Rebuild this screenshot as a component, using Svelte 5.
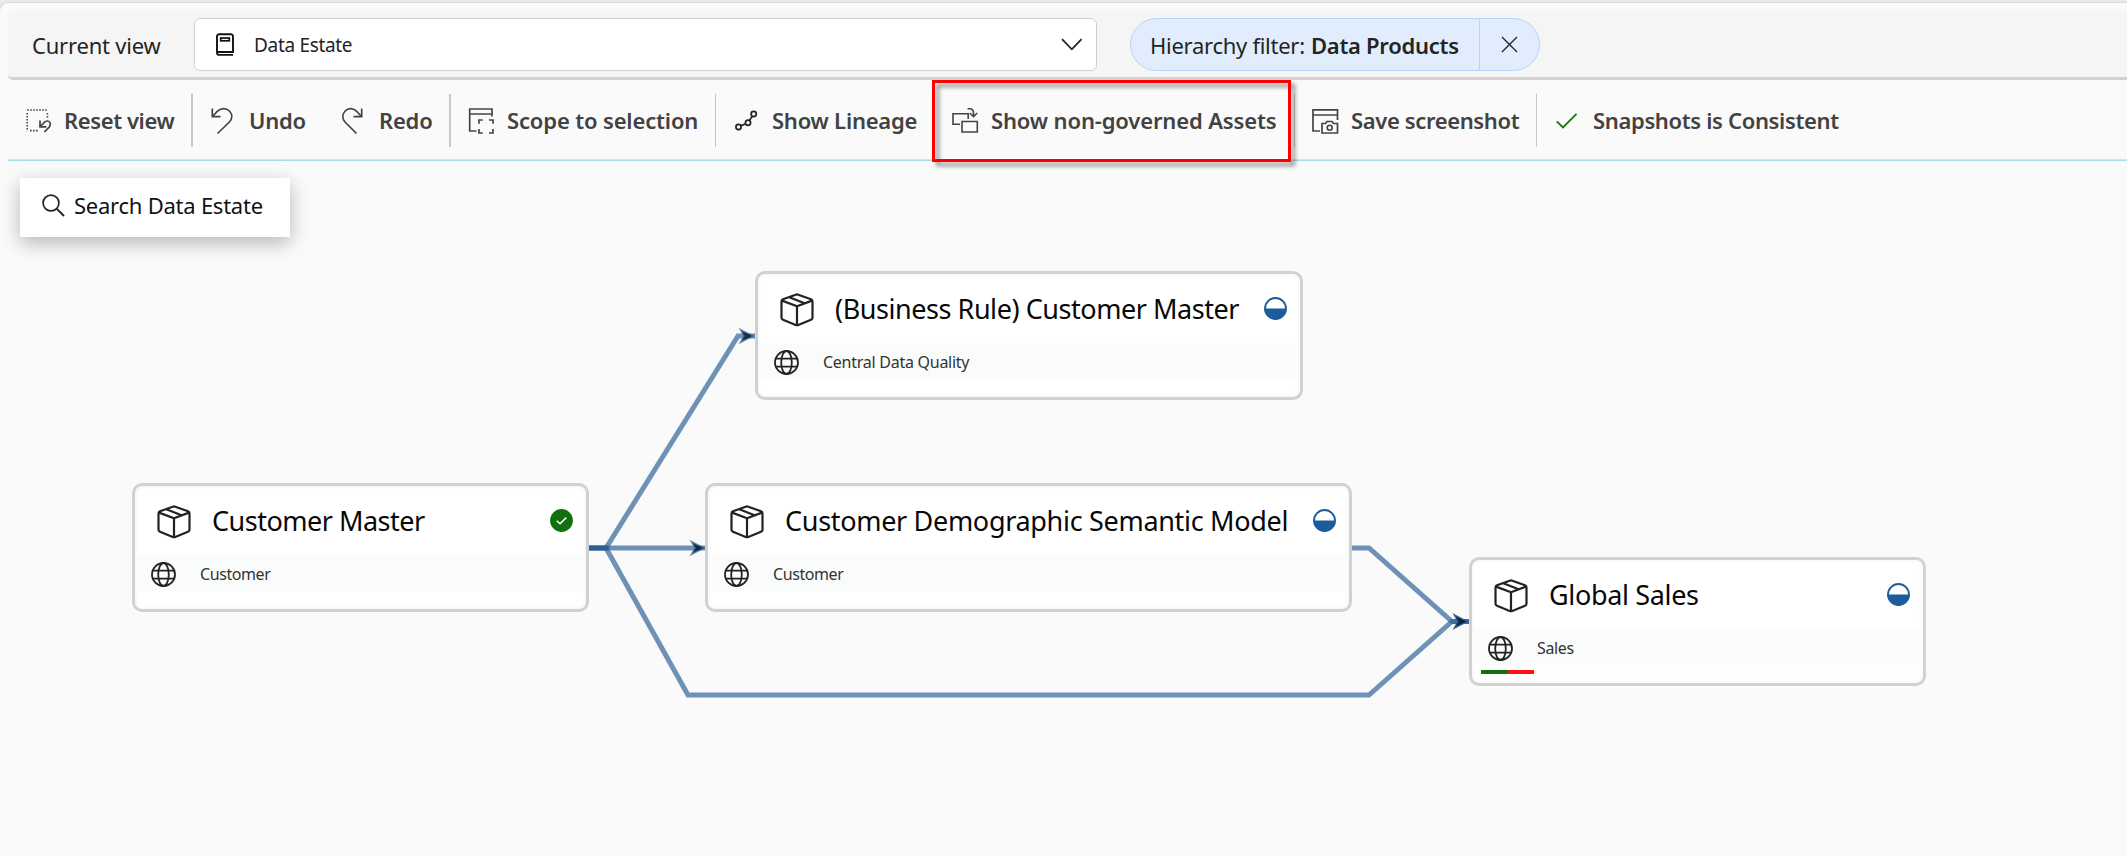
<script>
  const tools = [
    { icon: 'reset', label: 'Reset view', before: 18, iconWidth: 25, gap: 13, width: 110, spacing: -0.4, sep: 2 },
    { icon: 'undo', label: 'Undo', before: 18, iconWidth: 22, gap: 16, width: 57, spacing: -0.22, sep: 0 },
    { icon: 'redo', label: 'Redo', before: 36, iconWidth: 21, gap: 16, width: 53, spacing: -0.22, sep: 2 },
    { icon: 'scope', label: 'Scope to selection', before: 17, iconWidth: 26, gap: 13, width: 191, spacing: -0.15, sep: 1 },
    { icon: 'lineage', label: 'Show Lineage', before: 19, iconWidth: 22, gap: 15, width: 145, spacing: -0.23, sep: 0 },
    { icon: 'assets', label: 'Show non-governed Assets', before: 35, iconWidth: 26, gap: 13, width: 286, spacing: -0.14, sep: 1 },
    { icon: 'save', label: 'Save screenshot', before: 17, iconWidth: 26, gap: 13, width: 168, spacing: -0.37, sep: 1 },
    { icon: 'check', label: 'Snapshots is Consistent', before: 19, iconWidth: 21, gap: 16, width: 246, spacing: -0.35, sep: 0 }
  ];

  const nodes = [
    { x: 132, y: 483, w: 457, title: 'Customer Master', domain: 'Customer', status: 'done', spacing: -0.5, sub: -0.42 },
    { x: 755, y: 271, w: 548, title: '(Business Rule) Customer Master', domain: 'Central Data Quality', status: 'half', spacing: -0.45, sub: -0.26 },
    { x: 705, y: 483, w: 647, title: 'Customer Demographic Semantic Model', domain: 'Customer', status: 'half', spacing: -0.31, sub: -0.42 },
    { x: 1469, y: 557, w: 457, title: 'Global Sales', domain: 'Sales', status: 'half', spacing: -0.35, sub: -0.35, quality: true }
  ];

  const edges = [
    'M588 548H606L738 336H755',
    'M588 548H706',
    'M588 548H606L688 695H1369L1452 621.5H1469',
    'M1352 548H1369L1452 621.5H1469'
  ];
  const arrows = [[755, 336], [706, 548], [1469, 621.5], [1469, 621.5]];
</script>

<div class="app">
  <div class="panel">
    <header>
      <span class="view-label">Current view</span>
      <div class="select">
        <svg class="book" width="18" height="24" viewBox="0 0 18 24">
          <path d="M17 21.9H3A2 2 0 0 1 1 20V3.5A2.2 2.2 0 0 1 3.2 1.2h11.6A2.2 2.2 0 0 1 17 3.5V19H1.5" fill="none" stroke="#111" stroke-width="1.9" />
          <rect x="4.7" y="5" width="8.6" height="2.8" fill="none" stroke="#111" stroke-width="1.7" />
        </svg>
        <span class="value">Data Estate</span>
        <svg width="22" height="13" viewBox="0 0 22 13"><path d="M1 1.2 10.8 11.3 20.6 1.2" fill="none" stroke="#242424" stroke-width="1.8" /></svg>
      </div>
      <div class="pill">
        <div class="filter"><span class="ft">Hierarchy filter:</span><b>Data Products</b></div>
        <div class="close">
          <svg width="17" height="17" viewBox="0 0 17 17"><path d="M1 1 16 16M16 1 1 16" stroke="#242424" stroke-width="1.4" /></svg>
        </div>
      </div>
    </header>

    <div class="toolbar">
      {#each tools as t}
        <div class="tool" style:padding-left="{t.before}px" style:gap="{t.gap}px">
          <svg class="ti" width={t.iconWidth} height="27" fill="none" stroke="#444" stroke-width="1.4">
            {#if t.icon === 'reset'}
              <path d="M1.2 3H21.8M1.2 6V24.2M21.4 6V12M4 23.6H13" stroke-dasharray="1.6 1.4" stroke-width="1.6" />
              <path d="M14 13.5v6.3h6.3M14.3 19.5l4-4.2c2-2 4.7-1.6 5.7.4.8 1.8.3 3.2-.8 4.4l-4.8 4.9" stroke-width="1.7" />
            {:else if t.icon === 'undo'}
              <path d="M1.3 1.5V9.7H9.5M1.5 9.5 6 4.7C9.5 1 15 .6 18.4 4C21.8 7.6 21.3 12 18.4 15L6.5 26.5" stroke-width="1.7" />
            {:else if t.icon === 'redo'}
              <path d="M19.7 1.5V9.7H11.5M19.5 9.5 15 4.7C11.5 1 6.4 .6 3.2 4C-.1 7.6 .3 12 3 15L14.5 26.5" stroke-width="1.7" />
            {:else if t.icon === 'scope'}
              <path d="M8.5 24H1.7V2H24V9.5M1.7 7H24M11 16.8V13H14.8M21 13H25V16.8M11 22V26H14.8M21 26H25V22" stroke-width="1.7" />
            {:else if t.icon === 'lineage'}
              <g stroke="#222" stroke-width="1.7"><circle cx="3.5" cy="20" r="2.6" /><circle cx="13" cy="15.7" r="2.6" /><circle cx="18.7" cy="7" r="2.6" /><path d="M5.8 18.9 10.7 16.8M14.3 13.4 17.3 9.3" /></g>
            {:else if t.icon === 'assets'}
              <path d="M8 17.2H1V6.8H16.2V12M10 14.5H25.3V25H10ZM15.5 1.8H17.5C20.5 1.8 21.5 3.6 21.5 6V9.5M17.8 6 21.5 9.7 25.2 6" stroke-width="1.6" />
            {:else if t.icon === 'save'}
              <path d="M8 24H1V2.8H25.5V13M1 8H25.5M10 26V16.5H13.5L15 14.5H20L21.5 16.5H25.5V26Z" stroke-width="1.7" />
              <circle cx="17.7" cy="20.8" r="2.5" stroke-width="1.6" />
            {:else}
              <path d="M.8 14.3 7 20.5 20.5 6.8" stroke="#107c10" stroke-width="1.9" />
            {/if}
          </svg>
          <span style:width="{t.width}px" style:letter-spacing="{t.spacing}px">{t.label}</span>
        </div>
        {#if t.sep}<i class="sep" style:width="{t.sep}px"></i>{/if}
      {/each}
    </div>

    <div class="search">
      <svg width="23" height="23" viewBox="0 0 23 23"><circle cx="9" cy="9" r="7.9" fill="none" stroke="#222" stroke-width="1.7" /><path d="M14.6 14.6 22 22" stroke="#222" stroke-width="1.9" /></svg>
      <span>Search Data Estate</span>
    </div>
  </div>

  <svg class="edges" width="2127" height="856">
    {#each edges as d}<path {d} fill="none" stroke="#205890" stroke-opacity=".64" stroke-width="5" />{/each}
    {#each arrows as [x, y]}
      <path d="M{x - 16.5} {y - 8.3}L{x - 0.5} {y}L{x - 16.5} {y + 8.3}L{x - 11.5} {y}Z" fill="#1f5a91" fill-opacity=".75" />
      <path d="M{x - 13.5} {y - 5}L{x - 3} {y}L{x - 13.5} {y + 5}L{x - 10} {y}Z" fill="#111a24" fill-opacity=".8" />
    {/each}
  </svg>

  {#each nodes as n}
    <div class="node" style:left="{n.x}px" style:top="{n.y}px" style:width="{n.w}px">
      <div class="head">
        <svg class="box" width="34" height="34" viewBox="0 0 34 34" fill="none" stroke="#222" stroke-width="2.2" stroke-linejoin="round">
          <path d="M15.7 1.7Q17 1.2 18.3 1.7L31 6.3Q32.5 7 32.5 8.5V24.8Q32.5 26.2 31 26.8L18.3 32Q17 32.5 15.7 32L3 26.8Q1.5 26.2 1.5 24.8V8.5Q1.5 7 3 6.3Z" />
          <path d="M2 7.6 17 13.2 32 7.6M17 13.2V32M9.3 4.2 24.6 10.2" />
        </svg>
        <span class="title" style:letter-spacing="{n.spacing}px">{n.title}</span>
        <svg class="badge" width="23" height="23" viewBox="0 0 23 23">
          {#if n.status === 'done'}
            <circle cx="11.5" cy="11.5" r="11.4" fill="#107010" />
            <path d="M6.8 11.8 10 14.8 16.3 8.6" fill="none" stroke="#fff" stroke-width="1.5" />
          {:else}
            <circle cx="11.5" cy="11.5" r="10.5" fill="#fff" stroke="#1d5c9c" stroke-width="1.9" />
            <path d="M.6 11.5H22.4A10.9 10.9 0 0 1 .6 11.5Z" fill="#1d5c9c" />
          {/if}
        </svg>
      </div>
      <div class="domain">
        <svg width="25" height="25" viewBox="0 0 25 25" fill="none" stroke="#222" stroke-width="1.8">
          <circle cx="12.5" cy="12.5" r="11.5" /><ellipse cx="12.5" cy="12.5" rx="5.3" ry="11.5" /><path d="M1.9 8.7H23.1M1.9 16.7H23.1" />
        </svg>
        <span style:letter-spacing="{n.sub}px">{n.domain}</span>
      </div>
      {#if n.quality}<div class="quality"><i></i><i></i></div>{/if}
    </div>
  {/each}

  <div class="highlight"></div>
</div>

<style>
  :global(body) { background: #ebebeb; overflow: hidden; }
  .app { position: relative; width: 2127px; height: 856px; box-sizing: border-box; padding-top: 3px; font-family: "Noto Sans", "Open Sans", sans-serif; font-size: 22px; color: #242424; white-space: nowrap; }
  .panel { height: 853px; box-sizing: border-box; background: #fafafa; border-radius: 8px 0 0 0; padding: 8px 0 0 8px; box-shadow: 0 0 2px rgba(0, 0, 0, .25); }
  svg { display: block; flex: none; overflow: visible; }
  header { height: 69px; box-sizing: border-box; background: #f5f5f5; border-bottom: 3px solid #d1d1d1; border-radius: 5px 0 0 5px; display: flex; align-items: center; padding-left: 24px; }
  .view-label { width: 162px; letter-spacing: -.2px; padding-top: 1px; }
  .select { width: 903px; height: 53px; box-sizing: border-box; border: 1px solid #d1d1d1; border-radius: 6px; background: #fff; display: flex; align-items: center; padding: 0 13px 0 21px; margin-top: 1px; }
  .value { font-size: 19px; letter-spacing: -.32px; margin-left: 20px; flex: 1; }
  .pill { width: 410px; height: 53px; box-sizing: border-box; margin: 1px 0 0 33px; border: 1px solid #b4d6fa; border-radius: 27px; background: #e1edfc; display: flex; }
  .filter { width: 349px; padding: 0 0 0 19px; box-sizing: border-box; display: flex; align-items: center; border-right: 1px solid #b4d6fa; }
  .ft { width: 161px; letter-spacing: -.27px; }
  .filter b { font-weight: 600; letter-spacing: -.28px; }
  .close { flex: 1; display: flex; align-items: center; padding-left: 21px; }
  .toolbar { height: 81px; box-sizing: border-box; border-bottom: 1px solid #a8dce6; box-shadow: inset 0 -1px #e0e0e0; display: flex; align-items: center; font-weight: 600; color: #424242; }
  .tool { display: flex; align-items: center; padding-right: 17px; height: 53px; }
  .tool:has(+ .tool) { padding-right: 0; }
  .tool span { flex: none; }
  .sep { height: 53px; background: #c7c7c7; }
  .search { width: 270px; height: 59px; box-sizing: border-box; margin: 17px 0 0 12px; background: #fff; box-shadow: 0 6px 18px rgba(0, 0, 0, .27); display: flex; align-items: center; gap: 9px; padding: 0 0 6px 22px; color: #111; letter-spacing: -.24px; }
  .search svg { margin-top: 1px; }
  .edges { position: absolute; left: 0; top: 0; }
  .node { position: absolute; height: 129px; box-sizing: border-box; border: 3px solid #d1d1d1; border-radius: 10px; background: #fff; box-shadow: inset 0 0 5px rgba(0, 0, 0, .06); }
  .head { height: 69px; display: flex; align-items: center; padding: 0 13px 0 22px; }
  .box { margin-top: 3px; }
  .title { flex: 1; margin-left: 21px; font-size: 27px; line-height: 36px; color: #080808; }
  .domain { height: 36px; box-sizing: border-box; margin: 0 3px; padding: 3px 0 0 13px; background: #fafcfc; display: flex; align-items: center; gap: 24px; font-size: 16px; color: #333; }
  .domain span { padding-bottom: 2px; }
  .quality { display: flex; width: 53px; height: 4px; margin: 5px 0 0 9px; }
  .quality i { flex: 1; background: #107010; }
  .quality i + i { background: #f11; }
  .highlight { position: absolute; left: 932px; top: 80px; width: 359px; height: 82px; box-sizing: border-box; border: 3px solid #f00; filter: drop-shadow(4px 4px 2px rgba(0, 0, 0, .45)); }
</style>
